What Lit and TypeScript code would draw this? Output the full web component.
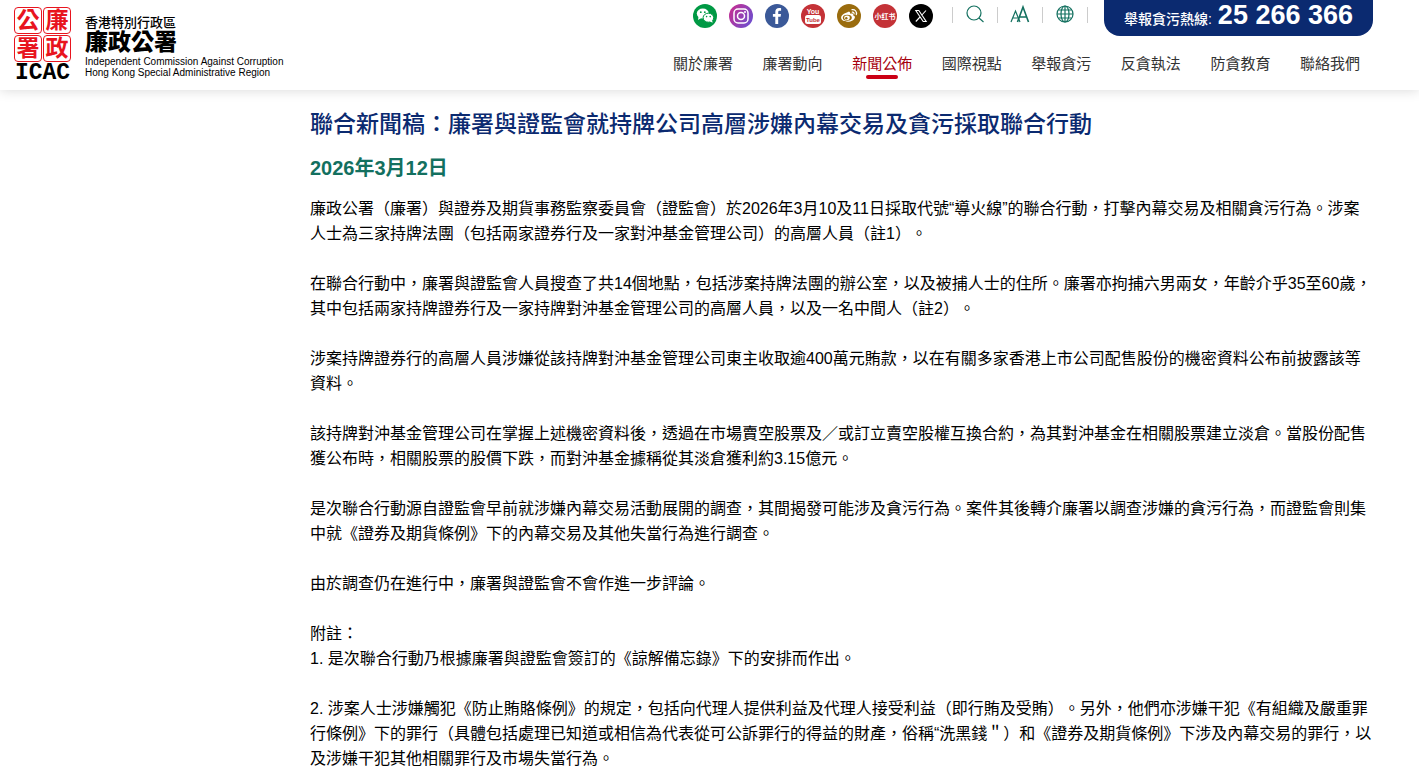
import { LitElement, html, css, svg } from "lit";
import { customElement } from "lit/decorators.js";
import { classMap } from "lit/directives/class-map.js";

const SOCIAL = [
  {
    name: "WeChat",
    art: svg`<circle cx="12" cy="12" r="12" fill="#009944"/>
      <ellipse cx="9.8" cy="9.6" rx="6" ry="5" fill="#fff"/><path d="M5.6 12.6 5 16l3.4-2z" fill="#fff"/>
      <ellipse cx="15.4" cy="13.7" rx="5.3" ry="4.5" fill="#fff" stroke="#009944" stroke-width="1"/><path d="M16.6 17.2l3 1.5-.6-3z" fill="#fff"/>
      <circle cx="7.8" cy="8.2" r=".9" fill="#009944"/><circle cx="11.8" cy="8.2" r=".9" fill="#009944"/>
      <circle cx="13.6" cy="12.6" r=".8" fill="#009944"/><circle cx="17.2" cy="12.6" r=".8" fill="#009944"/>`,
  },
  {
    name: "Instagram",
    art: svg`<defs><linearGradient id="ig" x1="0" y1="0.2" x2="1" y2="0.8"><stop offset="0" stop-color="#c52e92"/><stop offset="1" stop-color="#6a4fd0"/></linearGradient></defs>
      <circle cx="12" cy="12" r="12" fill="url(#ig)"/>
      <rect x="5" y="5" width="14" height="14" rx="4" fill="none" stroke="#fff" stroke-width="1.5"/>
      <circle cx="12" cy="12" r="3.5" fill="none" stroke="#fff" stroke-width="1.5"/><circle cx="16" cy="8" r="1" fill="#fff"/>`,
  },
  {
    name: "Facebook",
    art: svg`<circle cx="12" cy="12" r="12" fill="#3b5998"/>
      <path d="M10.3 20v-7.2H7.9V10h2.4V8c0-2.5 1.5-3.9 3.8-3.9.9 0 1.7.1 2 .1v2.6h-1.5c-1.1 0-1.4.6-1.4 1.4V10h2.8l-.4 2.8h-2.4V20z" fill="#fff"/>`,
  },
  {
    name: "YouTube",
    art: svg`<circle cx="12" cy="12" r="12" fill="#c43237"/>
      <text x="12" y="9.8" class="you">You</text><rect x="4" y="11" width="16" height="9" rx="2.5" fill="#fff"/><text x="12" y="18" class="tube">Tube</text>`,
  },
  {
    name: "Weibo",
    art: svg`<circle cx="12" cy="12" r="12" fill="#9a6c0e"/>
      <path d="M10.5 8.2c1.6-.8 3-.2 2.6 1.6 2-.8 3.6-.2 3 1.4 1.4.4 2 1.3 1.8 2.3-.4 2.4-3.5 4.3-7.2 4.3-3.8 0-6.6-1.7-6.6-4.2 0-2 2.8-4.6 6.4-5.4z" fill="#fff"/>
      <ellipse cx="10.3" cy="13.7" rx="4.5" ry="3" fill="#9a6c0e"/><ellipse cx="10" cy="13.8" rx="2.8" ry="2.3" fill="#fff"/><circle cx="9.3" cy="14.2" r="1.2" fill="#9a6c0e"/>
      <path d="M15 5.6c3-.5 5.2 2 4.3 5M15.3 8.1c1.3-.2 2 .8 1.7 1.9" fill="none" stroke="#fff" stroke-width="1.2" stroke-linecap="round"/>`,
  },
  {
    name: "小紅書",
    art: svg`<circle cx="12" cy="12" r="12" fill="#c43237"/><text x="12" y="15" class="red-book">小红书</text>`,
  },
  {
    name: "X",
    art: svg`<circle cx="12" cy="12" r="12" fill="#000"/>
      <path d="M6.8 6.5h3l7.4 11h-3zM17 6.5l-4.6 5M11 13l-4.2 4.5" fill="none" stroke="#fff" stroke-width="1.1"/>`,
  },
];

const TOOLS = [
  {
    name: "搜尋",
    art: svg`<circle cx="9" cy="9" r="7"/><path d="M14 14l4.5 4"/>`,
  },
  {
    name: "字型大小",
    art: svg`<path d="M1 18 5.5 7 10 18M2.6 14h5.8"/><path d="M7.5 18 13 3l5.5 15M9.5 13h7" stroke-width="1.6"/>`,
  },
  {
    name: "語言",
    art: svg`<circle cx="10" cy="10" r="8"/><ellipse cx="10" cy="10" rx="4" ry="8"/><path d="M10 2v16M2 10h16M3.5 6h13M3.5 14h13"/>`,
  },
];

const SEAL = ["公", "廉", "署", "政"];

const NAV = ["關於廉署", "廉署動向", "新聞公佈", "國際視點", "舉報貪污", "反貪執法", "防貪教育", "聯絡我們"];

const PARAGRAPHS = [
  "廉政公署（廉署）與證券及期貨事務監察委員會（證監會）於2026年3月10及11日採取代號“導火線”的聯合行動，打擊內幕交易及相關貪污行為。涉案人士為三家持牌法團（包括兩家證券行及一家對沖基金管理公司）的高層人員（註1）。",
  "在聯合行動中，廉署與證監會人員搜查了共14個地點，包括涉案持牌法團的辦公室，以及被捕人士的住所。廉署亦拘捕六男兩女，年齡介乎35至60歲，其中包括兩家持牌證券行及一家持牌對沖基金管理公司的高層人員，以及一名中間人（註2）。",
  "涉案持牌證券行的高層人員涉嫌從該持牌對沖基金管理公司東主收取逾400萬元賄款，以在有關多家香港上市公司配售股份的機密資料公布前披露該等資料。",
  "該持牌對沖基金管理公司在掌握上述機密資料後，透過在市場賣空股票及／或訂立賣空股權互換合約，為其對沖基金在相關股票建立淡倉。當股份配售獲公布時，相關股票的股價下跌，而對沖基金據稱從其淡倉獲利約3.15億元。",
  "是次聯合行動源自證監會早前就涉嫌內幕交易活動展開的調查，其間揭發可能涉及貪污行為。案件其後轉介廉署以調查涉嫌的貪污行為，而證監會則集中就《證券及期貨條例》下的內幕交易及其他失當行為進行調查。",
  "由於調查仍在進行中，廉署與證監會不會作進一步評論。",
];

const NOTES = [
  "1. 是次聯合行動乃根據廉署與證監會簽訂的《諒解備忘錄》下的安排而作出。",
  "2. 涉案人士涉嫌觸犯《防止賄賂條例》的規定，包括向代理人提供利益及代理人接受利益（即行賄及受賄）。另外，他們亦涉嫌干犯《有組織及嚴重罪行條例》下的罪行（具體包括處理已知道或相信為代表從可公訴罪行的得益的財產，俗稱“洗黑錢＂）和《證券及期貨條例》下涉及內幕交易的罪行，以及涉嫌干犯其他相關罪行及市場失當行為。",
];

@customElement("site-header")
export class SiteHeader extends LitElement {
  static styles = css`
    :host { display: block; position: relative; z-index: 1; background: #fff; box-shadow: 0 0 12px rgba(0, 0, 0, 0.16); }
    a { color: inherit; text-decoration: none; }
    .bar { display: flex; justify-content: space-between; height: 90px; padding-right: 46px; }
    .brand { display: flex; gap: 14px; padding: 7px 0 0 14px; align-items: flex-start; color: #000; }
    .emblem { display: flex; flex-direction: column; align-items: center; }
    .seal { display: grid; grid-template-columns: 28px 28px; gap: 1px; }
    .cell { box-sizing: border-box; height: 27px; border: 1px solid #e8141e; border-radius: 4px; color: #e8141e; font-size: 23px; line-height: 25px; font-weight: 700; text-align: center; }
    .acronym { font: 700 23px/22px "Liberation Mono", monospace; }
    .names { display: flex; flex-direction: column; padding-top: 8px; }
    .region { font-size: 13px; line-height: 16px; font-weight: 500; }
    .office { font-size: 23px; line-height: 23px; font-weight: 900; }
    .english { font-size: 10px; line-height: 11px; padding-top: 2px; }
    .side { display: flex; flex-direction: column; align-items: flex-end; }
    .top { display: flex; align-items: flex-start; }
    .social { display: flex; gap: 12px; padding: 4px 19px 0 0; }
    .social a, .social svg { display: block; width: 24px; height: 24px; }
    .you, .tube, .red-book { font-family: "Liberation Sans Narrow", "Liberation Sans", "Noto Sans CJK SC", sans-serif; font-weight: 700; text-anchor: middle; }
    .you { font-size: 7px; fill: #fff; }
    .tube { font-size: 6px; fill: #c43237; }
    .red-book { font-size: 7px; fill: #fff; }
    .tools { display: flex; padding: 4px 16px 0 0; }
    .tool { display: flex; align-items: center; border-left: 1px solid #ccc; height: 16px; margin-top: 3px; }
    .tool button { appearance: none; border: 0; background: none; padding: 0 12px 2px; color: #13705f; }
    .tool svg { display: block; width: 20px; height: 20px; fill: none; stroke: currentColor; stroke-width: 1.2; }
    .tools::after { content: ""; width: 1px; height: 16px; margin-top: 3px; background: #ccc; }
    .hotline { display: flex; align-items: baseline; gap: 6px; height: 36px; box-sizing: border-box; padding: 0 20px; border-radius: 0 0 16px 16px; background: #0b2a70; color: #fff; font-weight: 700; font-size: 14px; line-height: 30px; white-space: nowrap; }
    .label { font-weight: 500; }
    .number { font-size: 27px; }
    nav { display: flex; justify-content: space-between; width: 687px; padding: 17px 13px 0 0; }
    .link { display: flex; flex-direction: column; align-items: center; font-size: 15px; line-height: 22px; color: #333; font-weight: 400; }
    .current { color: #a6000c; }
    .current::after { content: ""; width: 32px; height: 4px; border-radius: 2px; background: #cb0015; }
  `;

  render() {
    return html`
      <header class="bar">
        <a class="brand" href="#">
          <span class="emblem">
            <span class="seal">${SEAL.map((c) => html`<span class="cell">${c}</span>`)}</span>
            <span class="acronym">ICAC</span>
          </span>
          <span class="names">
            <span class="region">香港特別行政區</span>
            <span class="office">廉政公署</span>
            <span class="english">Independent Commission Against Corruption<br />Hong Kong Special Administrative Region</span>
          </span>
        </a>
        <div class="side">
          <div class="top">
            <div class="social">
              ${SOCIAL.map((s) => html`<a href="#" aria-label=${s.name}><svg viewBox="0 0 24 24">${s.art}</svg></a>`)}
            </div>
            <div class="tools">
              ${TOOLS.map((t) => html`<span class="tool"><button type="button" aria-label=${t.name}><svg viewBox="0 0 20 20">${t.art}</svg></button></span>`)}
            </div>
            <a class="hotline" href="tel:25266366"><span class="label">舉報貪污熱線:</span><span class="number">25 266 366</span></a>
          </div>
          <nav>
            ${NAV.map((label) => html`<a href="#" class=${classMap({ link: true, current: label === "新聞公佈" })}>${label}</a>`)}
          </nav>
        </div>
      </header>
    `;
  }
}

@customElement("app-root")
export class AppRoot extends LitElement {
  static styles = css`
    :host { display: block; height: 100vh; overflow: hidden; background: #fff; color: #000; font-family: "Liberation Sans", "Noto Sans CJK TC", sans-serif; text-spacing-trim: space-all; }
    main { padding: 18px 46px 0 310px; }
    h1 { margin: 0; font-size: 23px; line-height: 32px; font-weight: 500; color: #0b2a70; }
    h2 { margin: 12px 0; font-size: 20px; line-height: 32px; font-weight: 700; color: #13705f; }
    p { margin: 0 0 25px; font-size: 16px; line-height: 25px; }
    .lead { margin: 0; }
  `;

  render() {
    return html`
      <site-header></site-header>
      <main lang="zh-Hant-HK">
        <h1>聯合新聞稿：廉署與證監會就持牌公司高層涉嫌內幕交易及貪污採取聯合行動</h1>
        <h2>2026年3月12日</h2>
        ${PARAGRAPHS.map((text) => html`<p>${text}</p>`)}
        <p class="lead">附註：</p>
        ${NOTES.map((text) => html`<p>${text}</p>`)}
      </main>
    `;
  }
}
